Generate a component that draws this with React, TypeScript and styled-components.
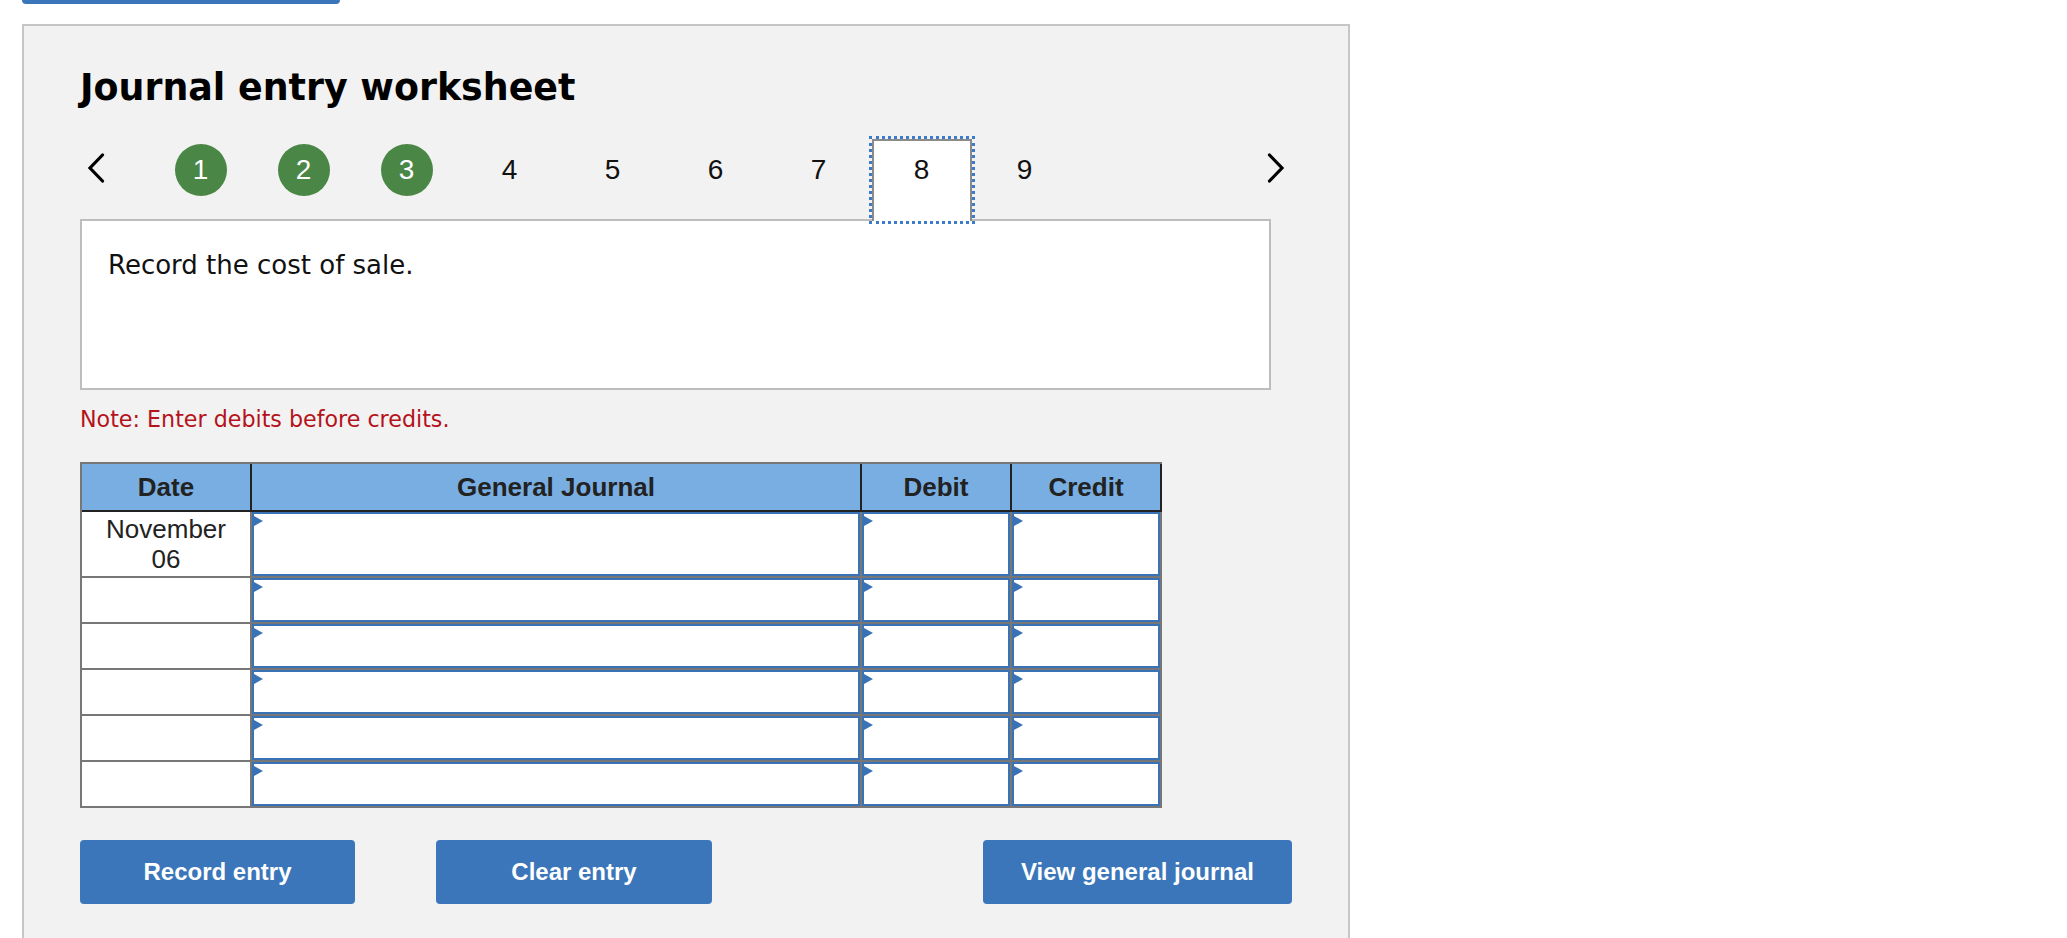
import * as React from 'react';
import styled, { createGlobalStyle } from 'styled-components';

const GlobalStyle = createGlobalStyle`
  body {
    margin: 0;
    background: #fff;
    font-family: "DejaVu Sans", Verdana, sans-serif;
  }
`;

const Page = styled.div`
  padding-left: 22px;
  width: 1328px;
`;

// bottom edge of a button that has scrolled out of view
const TopButtonEdge = styled.div`
  width: 318px;
  height: 4px;
  background: #3a76b9;
  border-radius: 0 0 4px 4px;
`;

const Panel = styled.section`
  box-sizing: border-box;
  width: 1328px;
  min-height: 960px;
  margin-top: 20px;
  padding: 40px 56px 0 56px;
  background: #f2f2f2;
  border: 2px solid #c6c6c6;
  border-bottom: none;
`;

const Title = styled.h2`
  margin: 0;
  font: 700 36.4px/44px "DejaVu Sans", Verdana, sans-serif;
  color: #000;
`;

const NavRow = styled.div`
  display: flex;
  align-items: flex-start;
  height: 82px;
  margin-top: 29px;
`;

const Chevron = styled.button<{ $side: 'left' | 'right' }>`
  display: flex;
  align-items: center;
  justify-content: center;
  width: 32px;
  height: 58px;
  padding: 0;
  background: none;
  border: none;
  margin-right: ${p => (p.$side === 'left' ? '37px' : '0')};
  margin-left: ${p => (p.$side === 'right' ? 'auto' : '0')};
`;

const StepItem = styled.div<{ $active?: boolean }>`
  box-sizing: border-box;
  display: flex;
  justify-content: center;
  width: 100px;
  height: 82px;
  margin: 0 1.5px;
  padding-top: 3px;
  border: 2px solid ${p => (p.$active ? '#8a8a8a' : 'transparent')};
  border-bottom: none;
  background: ${p => (p.$active ? '#fff' : 'transparent')};
  outline: ${p => (p.$active ? '3px dotted #3b7bc8' : 'none')};
  position: relative;
  z-index: ${p => (p.$active ? 1 : 0)};
`;

const StepMark = styled.span<{ $done?: boolean }>`
  display: flex;
  align-items: center;
  justify-content: center;
  width: 52px;
  height: 52px;
  border-radius: 50%;
  background: ${p => (p.$done ? '#4a8645' : 'transparent')};
  color: ${p => (p.$done ? '#fff' : '#111')};
  font: 400 28px/1 "Liberation Sans", Arial, sans-serif;
`;

const Prompt = styled.div`
  box-sizing: border-box;
  width: 1191px;
  height: 171px;
  margin-top: -2px;
  padding: 28px 26px;
  background: #fff;
  border: 2px solid #bdbdbd;
  font: 400 26px/32px "DejaVu Sans", Verdana, sans-serif;
  color: #111;
`;

const Note = styled.p`
  margin: 15px 0 0;
  font: 400 22.2px/28px "DejaVu Sans", Verdana, sans-serif;
  color: #b5121b;
`;

const Table = styled.table`
  margin-top: 29px;
  width: 1082px;
  table-layout: fixed;
  border-spacing: 0;
  border-top: 2px solid #777;
  border-left: 2px solid #777;
  font-family: "Liberation Sans", Arial, sans-serif;
`;

const HeadCell = styled.th<{ $width: number }>`
  box-sizing: border-box;
  width: ${p => p.$width}px;
  height: 48px;
  padding: 0;
  background: #79aee2;
  border-right: 2px solid #222;
  border-bottom: 2px solid #222;
  font-size: 26px;
  font-weight: 700;
  color: #222;
  text-align: center;
  vertical-align: middle;
`;

const DateCell = styled.td`
  padding: 2px 0 0;
  background: #fff;
  border-right: 2px solid #777;
  border-bottom: 2px solid #777;
  font-size: 26px;
  line-height: 30px;
  color: #222;
  text-align: center;
  vertical-align: top;
`;

const EntryCell = styled.td`
  padding: 0;
  border-right: 2px solid #777;
  border-bottom: 2px solid #777;
  vertical-align: top;
`;

const EntryField = styled.div<{ $tall?: boolean }>`
  box-sizing: border-box;
  position: relative;
  height: ${p => (p.$tall ? '64px' : '44px')};
  background: #fff;
  border: 2px solid #3a72b6;

  &::before {
    content: '';
    position: absolute;
    left: 0;
    top: 2px;
    border-top: 5.5px solid transparent;
    border-bottom: 5.5px solid transparent;
    border-left: 9px solid #3a72b6;
  }
`;

const ButtonRow = styled.div`
  display: flex;
  gap: 81px;
  width: 1212px;
  margin-top: 32px;
`;

const ActionButton = styled.button<{ $width: number; $push?: boolean }>`
  width: ${p => p.$width}px;
  height: 64px;
  margin-left: ${p => (p.$push ? 'auto' : '0')};
  background: #3a76b9;
  border: none;
  border-radius: 4px;
  color: #fff;
  font: 700 24px "Liberation Sans", Arial, sans-serif;
`;

const ChevronIcon = ({ dir }: { dir: 'left' | 'right' }) => (
  <svg width="18" height="30" viewBox="0 0 18 30">
    <polyline
      points={dir === 'left' ? '15.5,2 3,15 15.5,28' : '2.5,2 15,15 2.5,28'}
      fill="none"
      stroke="#000"
      strokeWidth="3.2"
      strokeLinecap="round"
      strokeLinejoin="miter"
    />
  </svg>
);

const steps = [1, 2, 3, 4, 5, 6, 7, 8, 9];
const done = [1, 2, 3];
const current = 8;

const columns = [
  { label: 'Date', width: 170 },
  { label: 'General Journal', width: 610 },
  { label: 'Debit', width: 150 },
  { label: 'Credit', width: 150 },
];

const rows = [
  { date: ['November', '06'] },
  { date: [] },
  { date: [] },
  { date: [] },
  { date: [] },
  { date: [] },
];

export default function App() {
  return (
    <Page>
      <GlobalStyle />
      <TopButtonEdge />
      <Panel>
        <Title>Journal entry worksheet</Title>

        <NavRow>
          <Chevron $side="left" aria-label="previous">
            <ChevronIcon dir="left" />
          </Chevron>
          {steps.map(n => (
            <StepItem key={n} $active={n === current}>
              <StepMark $done={done.includes(n)}>{n}</StepMark>
            </StepItem>
          ))}
          <Chevron $side="right" aria-label="next">
            <ChevronIcon dir="right" />
          </Chevron>
        </NavRow>

        <Prompt>Record the cost of sale.</Prompt>

        <Note>Note: Enter debits before credits.</Note>

        <Table>
          <thead>
            <tr>
              {columns.map(c => (
                <HeadCell key={c.label} $width={c.width}>
                  {c.label}
                </HeadCell>
              ))}
            </tr>
          </thead>
          <tbody>
            {rows.map((r, i) => (
              <tr key={i}>
                <DateCell>
                  {r.date.map(line => (
                    <div key={line}>{line}</div>
                  ))}
                </DateCell>
                <EntryCell>
                  <EntryField $tall={i === 0} />
                </EntryCell>
                <EntryCell>
                  <EntryField $tall={i === 0} />
                </EntryCell>
                <EntryCell>
                  <EntryField $tall={i === 0} />
                </EntryCell>
              </tr>
            ))}
          </tbody>
        </Table>

        <ButtonRow>
          <ActionButton $width={275}>Record entry</ActionButton>
          <ActionButton $width={276}>Clear entry</ActionButton>
          <ActionButton $width={309} $push>
            View general journal
          </ActionButton>
        </ButtonRow>
      </Panel>
    </Page>
  );
}
